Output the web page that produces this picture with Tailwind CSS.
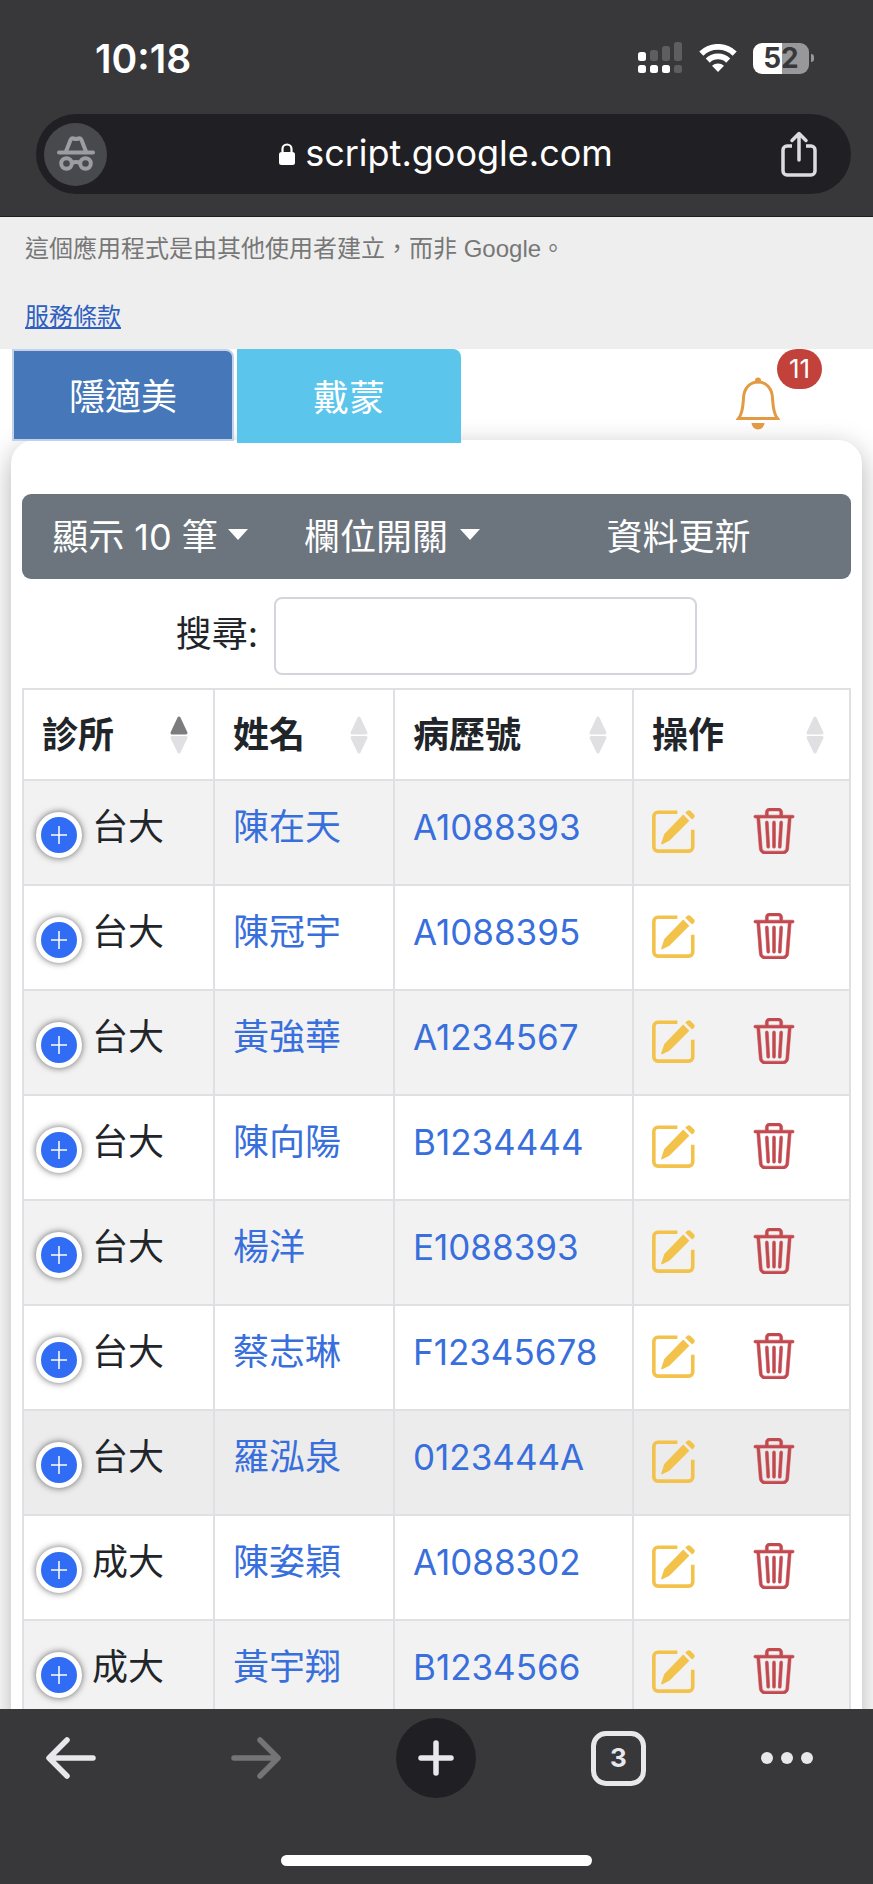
<!DOCTYPE html>
<html lang="zh-Hant">

<head>
    <meta charset="UTF-8">
    <meta name="viewport" content="width=device-width, initial-scale=1.0">
    <title>隱適美 / 戴蒙</title>
    <script src="https://cdn.jsdelivr.net/npm/@tailwindcss/browser@4"></script>
</head>

<body class="flex h-screen flex-col overflow-hidden bg-white font-['Inter','Noto_Sans_CJK_TC',sans-serif] text-[#212529]">
    <!-- icons used in every row -->
    <svg class="hidden" aria-hidden="true">
        <symbol id="icon-edit" viewBox="0 0 42 42">
            <path d="M24 3H5a4 4 0 0 0-4 4v30a4 4 0 0 0 4 4h30a4 4 0 0 0 4-4V20" fill="none" stroke="currentColor" stroke-width="3.500" transform="translate(.8 -.8)" />
            <path d="M30.500 4.500l6 6L17 30l-7 3.500c-.8.300-1.300-.2-1-1L12 23.500z" fill="currentColor" />
            <path d="M32.500 2.700l1.700-1.700a2.500 2.500 0 0 1 3.500 0l3.200 3.200a2.500 2.500 0 0 1 0 3.500l-1.700 1.700z" fill="currentColor" />
        </symbol>
        <symbol id="icon-trash" viewBox="0 0 16 16">
            <path fill="currentColor" stroke="currentColor" stroke-width=".2" d="M6.500 1h3a.5.5 0 0 1 .5.5v1H6v-1a.5.5 0 0 1 .5-.5M11 2.500v-1A1.500 1.500 0 0 0 9.500 0h-3A1.500 1.500 0 0 0 5 1.500v1H1.500a.5.5 0 0 0 0 1h.538l.853 10.660A2 2 0 0 0 4.885 16h6.230a2 2 0 0 0 1.994-1.840l.853-10.660h.538a.5.5 0 0 0 0-1zm1.958 1-.846 10.580a1 1 0 0 1-.997.920h-6.230a1 1 0 0 1-.997-.920L3.042 3.500zm-7.487 1a.5.5 0 0 1 .528.470l.5 8.500a.5.5 0 0 1-.998.060L5 5.030a.5.5 0 0 1 .470-.530Zm5.058 0a.5.5 0 0 1 .470.530l-.5 8.500a.5.5 0 1 1-.998-.060l.5-8.500a.5.5 0 0 1 .528-.470M8 4.500a.5.5 0 0 1 .5.5v8.500a.5.5 0 0 1-1 0V5a.5.5 0 0 1 .5-.5" />
        </symbol>
        <symbol id="icon-sort" viewBox="0 0 18 38">
            <path d="M9 2L16 17H2z" class="fill-(--up,#e0e0e2) stroke-(--up,#e0e0e2)" stroke-width="3" stroke-linejoin="round" />
            <path d="M9 36L16 21.500H2z" fill="#e0e0e2" stroke="#e0e0e2" stroke-width="3" stroke-linejoin="round" />
        </symbol>
    </svg>

    <header class="shrink-0 border-b border-[#1f1f22] bg-[#38383b] pb-[22px] text-white">
        <!-- status bar -->
        <div class="flex h-[114px] items-center justify-between pt-0.5 pr-[59px] pl-[95px]">
            <time class="text-[39px] leading-none font-semibold">10:18</time>
            <div class="flex items-center gap-4">
                <svg class="h-8 w-[45px]" viewBox="0 0 45 32" fill="#fff">
                    <rect x="0" y="10" width="8" height="9" rx="2.500" />
                    <rect x="0" y="23" width="8" height="8" rx="2.500" />
                    <rect x="12" y="23" width="8" height="8" rx="2.500" />
                    <rect x="24" y="23" width="8" height="8" rx="2.500" />
                    <g fill="#5e5e61">
                        <rect x="12" y="8" width="8" height="11" rx="2.500" />
                        <rect x="24" y="4" width="8" height="15" rx="2.500" />
                        <rect x="36" y="0" width="8" height="19" rx="2.500" />
                        <rect x="36" y="23" width="8" height="8" rx="2.500" />
                    </g>
                </svg>
                <svg class="h-7 w-[38px]" viewBox="0 0 38 28" fill="none" stroke="#fff" stroke-width="5.800">
                    <path d="M2.300 9.600a24 24 0 0 1 33.400 0" />
                    <path d="M8.800 16.600a14.600 14.600 0 0 1 20.400 0" />
                    <path d="M19 28l-6-6.300a9 9 0 0 1 12 0z" fill="#fff" stroke="none" />
                </svg>
                <div class="flex items-center gap-0.5">
                    <span class="flex h-[31px] w-14 items-center justify-center rounded-[9px] bg-linear-to-r from-white from-52% to-[#98989b] to-52% text-[28px] leading-none font-bold text-[#38383b]">52</span>
                    <span class="h-2 w-[3px] rounded-r-full bg-[#98989b]"></span>
                </div>
            </div>
        </div>
        <!-- address bar -->
        <div class="mr-[22px] ml-9 flex h-20 items-center justify-between rounded-full bg-[#202024] pr-[34px] pl-2">
            <button type="button" aria-label="無痕模式" class="flex size-[63px] items-center justify-center rounded-full bg-[#47494c]">
                <svg class="h-9 w-[38px]" viewBox="0 0 38 36" fill="none" stroke="#9b9da2" stroke-width="4" stroke-linecap="round" stroke-linejoin="round">
                    <path d="M2 16.500h34" />
                    <path d="M9 15.500l4.500-11.500c.6-1.500 1.500-2 3-1.500 1.800.6 3.200.6 5 0 1.500-.5 2.400 0 3 1.500L29 15.500" />
                    <circle cx="9.500" cy="27.500" r="5.300" />
                    <circle cx="28.500" cy="27.500" r="5.300" />
                    <path d="M15 27c2.500-1.300 5.500-1.300 8 0" />
                </svg>
            </button>
            <div class="flex items-center gap-2.5 pl-1">
                <svg class="h-[22px] w-4" viewBox="0 0 16 22">
                    <rect y="9" width="16" height="13" rx="2.500" fill="#fff" />
                    <path d="M3.500 10V6a4.500 4.500 0 0 1 9 0v4" fill="none" stroke="#fff" stroke-width="2.200" />
                </svg>
                <span class="pb-0.5 text-[36px] leading-none">script.google.com</span>
            </div>
            <button type="button" aria-label="分享">
                <svg class="h-[46px] w-9" viewBox="0 0 36 46" fill="none" stroke="#dcdce0" stroke-width="3.500" stroke-linecap="round" stroke-linejoin="round">
                    <path d="M11 15H6a4 4 0 0 0-4 4v21a4 4 0 0 0 4 4h24a4 4 0 0 0 4-4V19a4 4 0 0 0-4-4h-5" stroke-linecap="butt" />
                    <path d="M18 29V3M11 9.500L18 2.500l7 7" />
                </svg>
            </button>
        </div>
    </header>

    <main class="min-h-0 flex-1 overflow-hidden">
        <div class="flex h-[132px] flex-col justify-between bg-[#eee] px-[25px] py-3.5 font-['Liberation_Sans','Noto_Sans_CJK_TC',sans-serif] text-[24px] leading-9 text-[#777]">
            <p>這個應用程式是由其他使用者建立，而非 Google。</p>
            <a href="#" class="self-start text-[#2f5fc0] underline">服務條款</a>
        </div>

        <!-- tabs -->
        <div class="relative z-10 flex h-[91px] items-start justify-between pr-[51px] pl-3 text-[36px] text-white">
            <div class="flex gap-[3px]">
                <button type="button" class="h-[92px] w-[222px] rounded-tr-lg border-2 border-[#c3d2ea] bg-[#4577b9] pt-1">隱適美</button>
                <button type="button" class="h-[94px] w-[224px] rounded-tr-lg bg-[#5bc5eb] pt-1">戴蒙</button>
            </div>
            <button type="button" aria-label="通知" class="relative h-[82px] w-[86px]">
                <svg class="mt-[27px] h-[53px] w-11" viewBox="0 0 44 53" fill="none" stroke="#e39a44" stroke-width="3">
                    <path d="M2.500 41.500C7 36 7 28 7.500 21 8 11 14 5 22 5s14 6 14.500 16c.5 7 .5 15 5 20.500z" />
                    <circle cx="22" cy="3.500" r="3" fill="#e39a44" stroke="none" />
                    <path d="M15.500 46h13a6.500 6.500 0 0 1-13 0z" fill="#e39a44" stroke="none" />
                </svg>
                <span class="absolute top-0 right-0 flex h-10 w-[45px] items-center justify-center rounded-full bg-[#c2413b] text-[26px] leading-none">11</span>
            </button>
        </div>

        <div class="mx-[11px] rounded-[24px] bg-white px-[11px] pt-[54px] pb-8 text-[36px] shadow-[0_8px_28px_rgba(0,0,0,0.3)]">
            <div class="flex h-[85px] items-center rounded-[9px] bg-[#6c757d] text-white">
                <button type="button" class="flex h-full w-[256px] items-center justify-center gap-2.5 whitespace-nowrap">
                    顯示 10 筆
                    <svg class="mb-1 h-[11px] w-5" viewBox="0 0 20 11" fill="#fff"><path d="M0 0h20L10 11z" /></svg>
                </button>
                <button type="button" class="flex h-full w-[228px] items-center justify-center gap-3 whitespace-nowrap">
                    欄位開關
                    <svg class="mb-1 h-[11px] w-5" viewBox="0 0 20 11" fill="#fff"><path d="M0 0h20L10 11z" /></svg>
                </button>
                <button type="button" class="h-full flex-1">資料更新</button>
            </div>

            <div class="flex items-center justify-center gap-4 pt-[18px] pb-[13px]">
                <label for="search" class="pb-1">搜尋:</label>
                <input type="search" id="search" class="h-[78px] w-[423px] rounded-lg border-2 border-[#d3d5da] px-4 outline-none">
            </div>

            <table class="w-full table-fixed border-collapse">
                <colgroup>
                    <col class="w-[191px]">
                    <col class="w-[180px]">
                    <col class="w-[239px]">
                    <col>
                </colgroup>
                <thead>
                    <tr class="h-[91px] text-left">
                        <th class="border-2 border-[#dee0e4] pr-[25px] pl-[18px] font-bold">
                            <div class="flex items-center justify-between">診所<svg class="h-[38px] w-[18px] [--up:#7c7c7e]"><use href="#icon-sort" /></svg></div>
                        </th>
                        <th class="border-2 border-[#dee0e4] pr-[25px] pl-[18px] font-bold">
                            <div class="flex items-center justify-between">姓名<svg class="h-[38px] w-[18px]"><use href="#icon-sort" /></svg></div>
                        </th>
                        <th class="border-2 border-[#dee0e4] pr-[25px] pl-[18px] font-bold">
                            <div class="flex items-center justify-between">病歷號<svg class="h-[38px] w-[18px]"><use href="#icon-sort" /></svg></div>
                        </th>
                        <th class="border-2 border-[#dee0e4] pr-[25px] pl-[18px] font-bold">
                            <div class="flex items-center justify-between">操作<svg class="h-[38px] w-[18px]"><use href="#icon-sort" /></svg></div>
                        </th>
                    </tr>
                </thead>
                <tbody id="patients"></tbody>
            </table>
        </div>
    </main>

    <!-- bottom navigation -->
    <footer class="relative z-20 flex h-[175px] shrink-0 flex-col items-center justify-between bg-[#38383b] pt-[9px] pb-[18px] text-[#e8e8ec]">
        <nav class="flex w-full items-center justify-between pr-[60px] pl-[46px]">
            <button type="button" aria-label="上一頁" class="w-[70px]">
                <svg class="h-[42px] w-[50px]" viewBox="0 0 50 42" fill="none" stroke="currentColor" stroke-width="5.500" stroke-linecap="round" stroke-linejoin="round">
                    <path d="M47 21H4M21 3L3 21l18 18" />
                </svg>
            </button>
            <button type="button" aria-label="下一頁" class="text-[#747477]">
                <svg class="h-[42px] w-[50px]" viewBox="0 0 50 42" fill="none" stroke="currentColor" stroke-width="5.500" stroke-linecap="round" stroke-linejoin="round">
                    <path d="M3 21h43M29 3l18 18-18 18" />
                </svg>
            </button>
            <button type="button" aria-label="新分頁" class="flex size-20 items-center justify-center rounded-full bg-[#202024]">
                <svg class="size-9" viewBox="0 0 36 36" fill="none" stroke="currentColor" stroke-width="5.500" stroke-linecap="round">
                    <path d="M18 3v30M3 18h30" />
                </svg>
            </button>
            <button type="button" aria-label="分頁" class="size-[55px] rounded-[15px] border-[5px] border-[#e8e8ec] text-[26px] leading-none font-bold">3</button>
            <button type="button" aria-label="更多" class="flex gap-2">
                <span class="size-3 rounded-full bg-[#e8e8ec]"></span>
                <span class="size-3 rounded-full bg-[#e8e8ec]"></span>
                <span class="size-3 rounded-full bg-[#e8e8ec]"></span>
            </button>
        </nav>
        <div class="h-[11px] w-[311px] rounded-full bg-white"></div>
    </footer>

    <script>
        const patients = [
            ['台大', '陳在天', 'A1088393'],
            ['台大', '陳冠宇', 'A1088395'],
            ['台大', '黃強華', 'A1234567'],
            ['台大', '陳向陽', 'B1234444'],
            ['台大', '楊洋', 'E1088393'],
            ['台大', '蔡志琳', 'F12345678'],
            ['台大', '羅泓泉', '0123444A'],
            ['成大', '陳姿穎', 'A1088302'],
            ['成大', '黃宇翔', 'B1234566'],
        ];

        document.getElementById('patients').innerHTML = patients.map(([clinic, name, number]) => `
            <tr class="h-[105px] align-top leading-[54px] odd:bg-[#f2f2f2] nth-7:bg-[#ececec]">
                <td class="border-2 border-[#dee0e4] pt-[19px] pl-3">
                    <div class="flex items-start gap-2.5">
                        <button type="button" aria-label="展開" class="mt-3 flex size-[46px] items-center justify-center rounded-full border-5 border-white bg-[#316cf4] shadow-[0_0_7px_rgba(0,0,0,0.6)]">
                            <svg class="size-[18px]" viewBox="0 0 18 18" stroke="#fff" stroke-width="1.500"><path d="M9 0v18M1 9h16" /></svg>
                        </button>
                        ${clinic}
                    </div>
                </td>
                <td class="border-2 border-[#dee0e4] pt-[19px] pl-[18px]"><a href="#" class="text-[#396fdc]">${name}</a></td>
                <td class="border-2 border-[#dee0e4] pt-[19px] pl-[18px] text-[35px]"><a href="#" class="text-[#396fdc]">${number}</a></td>
                <td class="border-2 border-[#dee0e4] pt-[27px] pl-[18px]">
                    <div class="flex items-center gap-14">
                        <button type="button" aria-label="編輯" class="text-[#f2c24b]"><svg class="size-[43px]"><use href="#icon-edit" /></svg></button>
                        <button type="button" aria-label="刪除" class="text-[#c2494f]"><svg class="size-[46px] overflow-visible"><use href="#icon-trash" class="overflow-visible" /></svg></button>
                    </div>
                </td>
            </tr>`).join('');
    </script>
</body>

</html>
